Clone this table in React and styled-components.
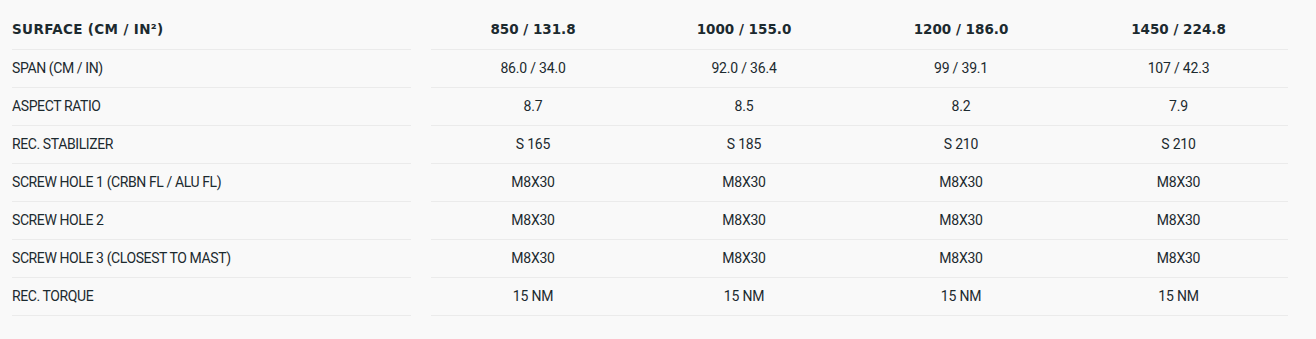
import React from 'react'
import styled, { createGlobalStyle } from 'styled-components'

const GlobalStyle = createGlobalStyle`
  html, body {
    margin: 0;
    padding: 0;
    background: #f9f9f9;
  }
  body {
    font-family: Roboto, "Liberation Sans", sans-serif;
    color: #1c2a2f;
  }
`

const sizes = ['850 / 131.8', '1000 / 155.0', '1200 / 186.0', '1450 / 224.8']

const rows = [
  ['SPAN (CM / IN)', ['86.0 / 34.0', '92.0 / 36.4', '99 / 39.1', '107 / 42.3']],
  ['ASPECT RATIO', ['8.7', '8.5', '8.2', '7.9']],
  ['REC. STABILIZER', ['S 165', 'S 185', 'S 210', 'S 210']],
  ['SCREW HOLE 1 (CRBN FL / ALU FL)', ['M8X30', 'M8X30', 'M8X30', 'M8X30']],
  ['SCREW HOLE 2', ['M8X30', 'M8X30', 'M8X30', 'M8X30']],
  ['SCREW HOLE 3 (CLOSEST TO MAST)', ['M8X30', 'M8X30', 'M8X30', 'M8X30']],
  ['REC. TORQUE', ['15 NM', '15 NM', '15 NM', '15 NM']],
]

const Specs = () => {
  return (
    <Table>
      <Row $head>
        <Label $head>SURFACE (CM / IN²)</Label>
        <Values $head>
          {sizes.map((s) => (
            <Value $head key={s}>{s}</Value>
          ))}
        </Values>
      </Row>
      {rows.map(([label, values]) => (
        <Row key={label}>
          <Label>{label}</Label>
          <Values>
            {values.map((v, i) => (
              <Value key={i}>{v}</Value>
            ))}
          </Values>
        </Row>
      ))}
    </Table>
  )
}

const Table = styled.div`
  width: 1276px;
  padding: 12px 0 0 12px;
`

const Row = styled.div`
  display: grid;
  grid-template-columns: 399px 857px;
  column-gap: 20px;
  height: 38px;
`

const cell = `
  border-bottom: 1px solid #ebebeb;
  display: flex;
  align-items: center;
`

const headFont = `
  font-family: "DejaVu Sans", sans-serif;
  font-weight: 700;
  font-size: 13.5px;
  padding-bottom: 3px;
`

const bodyFont = `
  font-family: Roboto, sans-serif;
  font-weight: 400;
  font-size: 14px;
  padding-bottom: 1px;
`

const Label = styled.div`
  ${cell}
  ${(p) => (p.$head ? headFont : bodyFont)}
  letter-spacing: ${(p) => (p.$head ? '0.35px' : '-0.4px')};
`

const Values = styled.div`
  ${cell}
  display: grid;
  grid-template-columns: 204px 218px 216px 219px;
  ${(p) => (p.$head ? 'padding-bottom: 3px;' : 'padding-bottom: 1px;')}
`

const Value = styled.div`
  text-align: center;
  ${(p) => (p.$head ? headFont : bodyFont)}
  padding-bottom: 0;
  letter-spacing: ${(p) => (p.$head ? '0' : '-0.2px')};
`

export default function App() {
  return (
    <>
      <GlobalStyle />
      <Specs />
    </>
  )
}
